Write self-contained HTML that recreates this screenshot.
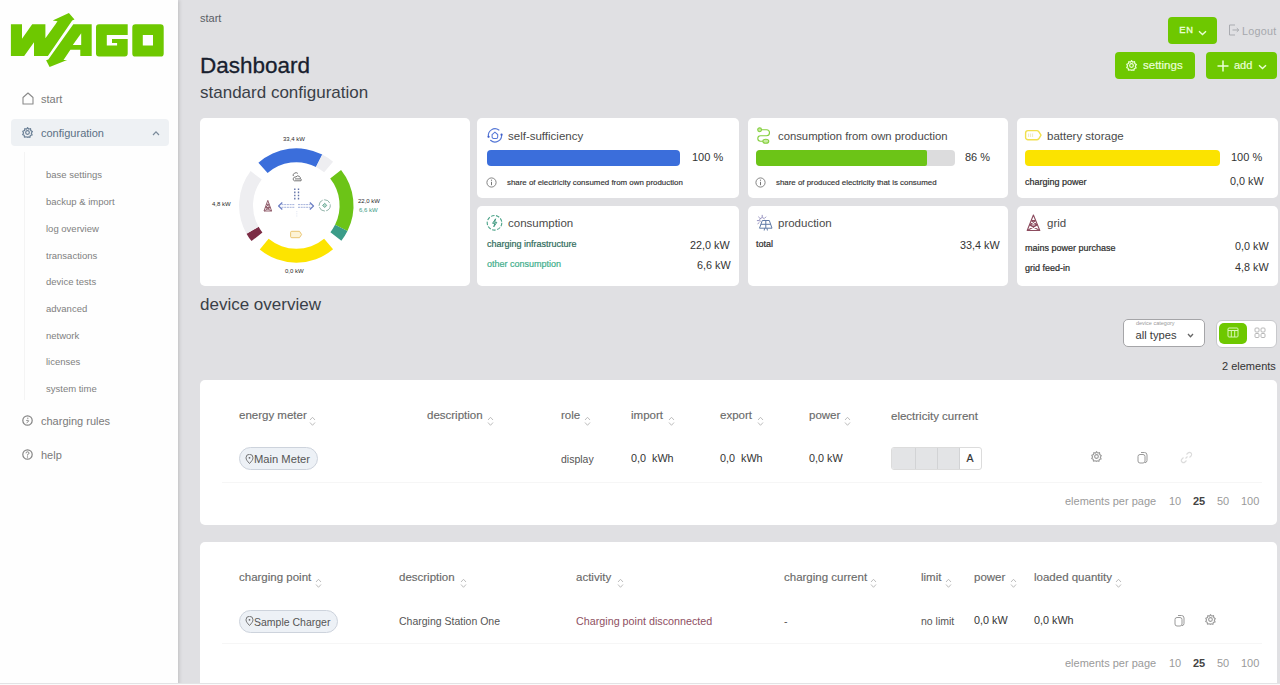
<!DOCTYPE html>
<html><head><meta charset="utf-8">
<style>
*{box-sizing:border-box;margin:0;padding:0}
html,body{width:1280px;height:685px;overflow:hidden}
body{background:#e0e0e3;font-family:"Liberation Sans",sans-serif;position:relative;color:#333}
.a{position:absolute;white-space:nowrap;line-height:1}
#side{position:absolute;left:0;top:0;width:178px;height:685px;background:#fefefe;box-shadow:1px 0 4px rgba(0,0,0,.16)}
.nav{font-size:11px;color:#7a7a7a}
.sub{font-size:9.5px;color:#808080}
.card{position:absolute;background:#fff;border-radius:5px}
.ct{font-size:11.5px;color:#4a4a4a}
.val{font-size:10.8px;color:#333}
.pct{font-size:11px;color:#333}
.small{font-size:7.9px;color:#333;-webkit-text-stroke:0.15px #333}
.lbl{font-size:9px;color:#2b2b2b;-webkit-text-stroke:0.2px currentColor}
.bar{position:absolute;height:16.6px;border-radius:4px;margin-top:0.5px}
.th{font-size:10.5px;color:#555}
.td{font-size:10.5px;color:#444}
.dl{font-size:6px;color:#2a2a2a}
.th{font-size:11.5px;color:#6a6a6a;-webkit-text-stroke:0.15px #6a6a6a}
.td{font-size:10.5px;color:#555}
.td2{font-size:10.8px;color:#333}
.chip{background:#edf1f6;border:1px solid #cdd3dc;border-radius:12px}
.chipt{font-size:10.5px;color:#555}
.epp{font-size:11px;color:#9a9a9a}
.pg{font-size:11px;color:#9a9a9a}
.btn{position:absolute;background:#6ec800;border-radius:4px}
</style></head><body>
<div id="side">
  <svg class="a" style="left:0;top:0" width="178" height="80" viewBox="0 0 178 80">
    <g fill="#6ec800">
      <polygon points="10.9,24.2 22,24.2 22,38.7 32.2,24.2 45.4,24.2 45.4,38.3 55.5,24.2 57.5,21.3 52.7,20.5 68.9,13.1 74.5,19.6 72.2,20.4 47.9,56 34,56 34,42.2 24.2,56 10.9,56"/>
      <polygon fill-rule="evenodd" points="73.3,24.2 91.7,24.2 91.7,56 80.3,56 80.3,49.8 70.4,49.8 63.5,59.9 67.1,59.9 49.6,66.9 46.1,60.3 48.3,59.5 ,73.3,24.2"/>
    </g>
    <polygon fill="#fff" points="81.2,33.2 81.2,45 72.8,45"/>
    <path fill="#6ec800" d="M99,24.2H127.7V35H106.8V45.6H117.1V43H112V38.9H127.7V53.6A3,3 0 0 1 124.7,56.6H99A3,3 0 0 1 96,53.6V27.2A3,3 0 0 1 99,24.2Z"/>
    <path fill="#6ec800" fill-rule="evenodd" d="M135.5,24.2H160.5A3.2,3.2 0 0 1 163.7,27.4V53.4A3.2,3.2 0 0 1 160.5,56.6H135.5A3.2,3.2 0 0 1 132.3,53.4V27.4A3.2,3.2 0 0 1 135.5,24.2ZM142.8,35V45.6H153V35Z"/>
  </svg>
  <!-- start -->
  <svg class="a" style="left:22px;top:92px" width="12" height="13" viewBox="0 0 12 13"><path d="M1,12V5.5L6,1L11,5.5V12Z" fill="none" stroke="#8a8a8a" stroke-width="1.1" stroke-linejoin="round"/></svg>
  <div class="a nav" style="left:41px;top:94px">start</div>
  <div class="a" style="left:11px;top:119px;width:158px;height:27px;background:#eef1f4;border-radius:4px"></div>
  <svg class="a" style="left:22px;top:127px" width="11" height="11" viewBox="0 0 12 12"><g fill="none" stroke="#6a7f95" stroke-width="1.3"><circle cx="6" cy="6" r="2"/><path d="M6,0.8L7.3,2.2L9.3,1.9L9.6,3.9L11.2,5L10.2,6.8L11,8.7L9.1,9.3L8.6,11.2L6.7,10.7L6,11.2L4.5,10.7L2.7,11L2.4,9.1L0.8,8.3L1.7,6.5L0.9,4.6L2.7,3.9L3.1,1.9L5,2.3Z"/></g></svg>
  <div class="a nav" style="left:41px;top:128px;color:#5b7085">configuration</div>
  <svg class="a" style="left:152px;top:130px" width="8" height="6" viewBox="0 0 8 6"><path d="M1,5L4,1.8L7,5" fill="none" stroke="#7a8a9a" stroke-width="1.2"/></svg>
  <div class="a" style="left:24px;top:152px;width:1px;height:248px;background:#f4f4f4"></div>
  <div class="a sub" style="left:46px;top:170px">base settings</div>
  <div class="a sub" style="left:46px;top:197px">backup &amp; import</div>
  <div class="a sub" style="left:46px;top:224px">log overview</div>
  <div class="a sub" style="left:46px;top:251px">transactions</div>
  <div class="a sub" style="left:46px;top:277px">device tests</div>
  <div class="a sub" style="left:46px;top:304px">advanced</div>
  <div class="a sub" style="left:46px;top:331px">network</div>
  <div class="a sub" style="left:46px;top:357px">licenses</div>
  <div class="a sub" style="left:46px;top:384px">system time</div>
  <svg class="a" style="left:22px;top:415px" width="11" height="11" viewBox="0 0 11 11"><circle cx="5.5" cy="5.5" r="4.7" fill="none" stroke="#858585" stroke-width="1.2"/><path d="M5.8,2.6V4.2M4.2,5.4L6.8,5.8L4.6,8.2" fill="none" stroke="#858585" stroke-width="0.9"/></svg>
  <div class="a nav" style="left:41px;top:416px">charging rules</div>
  <svg class="a" style="left:22px;top:449px" width="11" height="11" viewBox="0 0 11 11"><circle cx="5.5" cy="5.5" r="4.7" fill="none" stroke="#858585" stroke-width="1.2"/><path d="M4,4.3Q4,2.8 5.5,2.8Q7,2.8 7,4.2Q7,5.2 5.5,5.6V6.5" fill="none" stroke="#858585" stroke-width="1"/><circle cx="5.5" cy="8" r="0.65" fill="#858585"/></svg>
  <div class="a nav" style="left:41px;top:450px">help</div>
</div>

<!-- MAIN -->
<div class="a" style="left:200px;top:13px;font-size:11px;color:#5a5e66">start</div>
<div class="a" style="left:200px;top:54.9px;font-size:22.5px;color:#18202e;-webkit-text-stroke:0.3px #18202e">Dashboard</div>
<div class="a" style="left:200px;top:84px;font-size:17px;color:#3a3f48">standard configuration</div>

<!-- top buttons -->
<div class="btn" style="left:1168px;top:17px;width:49px;height:27px"></div>
<div class="a" style="left:1179.3px;top:26.2px;font-size:9.3px;letter-spacing:0.7px;color:#eaffd6;-webkit-text-stroke:0.35px #eaffd6">EN</div>
<svg class="a" style="left:1198px;top:30px" width="9" height="6" viewBox="0 0 9 6"><path d="M1,1.2L4.5,4.6L8,1.2" fill="none" stroke="#eaffd6" stroke-width="1.4"/></svg>
<svg class="a" style="left:1228px;top:24px" width="12" height="12" viewBox="0 0 12 12"><path d="M7,1H1.5V11H7M4.5,6H10.5M8.8,4.2L10.8,6L8.8,7.8" fill="none" stroke="#a9abb0" stroke-width="1"/></svg>
<div class="a" style="left:1242px;top:25.5px;font-size:10.8px;letter-spacing:0.25px;color:#a6a8ad">Logout</div>

<div class="btn" style="left:1115px;top:52px;width:80px;height:27px"></div>
<svg class="a" style="left:1126px;top:60px" width="11" height="11" viewBox="0 0 12 12"><g fill="none" stroke="#eaffd6" stroke-width="1.3"><circle cx="6" cy="6" r="2"/><path d="M6,0.8L7.3,2.2L9.3,1.9L9.6,3.9L11.2,5L10.2,6.8L11,8.7L9.1,9.3L8.6,11.2L6.7,10.7L6,11.2L4.5,10.7L2.7,11L2.4,9.1L0.8,8.3L1.7,6.5L0.9,4.6L2.7,3.9L3.1,1.9L5,2.3Z"/></g></svg>
<div class="a" style="left:1143px;top:60px;font-size:11.5px;color:#eaffd6;-webkit-text-stroke:0.2px #eaffd6">settings</div>
<div class="btn" style="left:1206px;top:52px;width:71px;height:27px"></div>
<svg class="a" style="left:1217px;top:60px" width="12" height="12" viewBox="0 0 12 12"><path d="M6,0.5V11.5M0.5,6H11.5" stroke="#eaffd6" stroke-width="1.5"/></svg>
<div class="a" style="left:1234px;top:60px;font-size:11px;color:#eaffd6;-webkit-text-stroke:0.2px #eaffd6">add</div>
<svg class="a" style="left:1258px;top:64px" width="9" height="6" viewBox="0 0 9 6"><path d="M1,1.2L4.5,4.6L8,1.2" fill="none" stroke="#eaffd6" stroke-width="1.4"/></svg>

<!-- CARDS -->
<div class="card" style="left:200px;top:118px;width:270px;height:168px"></div>
<div class="card" style="left:477px;top:118px;width:262px;height:80px"></div>
<div class="card" style="left:748px;top:118px;width:260px;height:80px"></div>
<div class="card" style="left:1017px;top:118px;width:261px;height:80px"></div>
<div class="card" style="left:477px;top:206px;width:262px;height:80px"></div>
<div class="card" style="left:748px;top:206px;width:260px;height:80px"></div>
<div class="card" style="left:1017px;top:206px;width:261px;height:80px"></div>

<!-- donut -->
<svg class="a" style="left:200px;top:118px" width="270" height="167" viewBox="200 118 270 167"><path fill="#3b6edb" d="M258.40,162.66A57.2,57.2 0 0 1 322.27,154.53L315.96,166.92A43.3,43.3 0 0 0 267.61,173.07Z"/><path fill="#eeeef1" d="M322.27,154.53A57.2,57.2 0 0 1 333.07,161.68L324.13,172.33A43.3,43.3 0 0 0 315.96,166.92Z"/><path fill="#6cc417" d="M341.07,169.89A57.2,57.2 0 0 1 347.49,231.02L335.05,224.82A43.3,43.3 0 0 0 330.19,178.55Z"/><path fill="#3b9c88" d="M347.49,231.02A57.2,57.2 0 0 1 341.37,240.72L330.42,232.16A43.3,43.3 0 0 0 335.05,224.82Z"/><path fill="#fde400" d="M333.07,249.32A57.2,57.2 0 0 1 259.76,249.51L268.64,238.82A43.3,43.3 0 0 0 324.13,238.67Z"/><path fill="#7c2c45" d="M251.53,241.11A57.2,57.2 0 0 1 246.52,233.67L258.61,226.82A43.3,43.3 0 0 0 262.41,232.45Z"/><path fill="#eeeef1" d="M246.52,233.67A57.2,57.2 0 0 1 250.62,171.08L261.72,179.44A43.3,43.3 0 0 0 258.61,226.82Z"/>
<g fill="none" stroke="#666" stroke-width="0.9"><path d="M293.2,176A2.8,2.8 0 0 1 297.8,173.4"/><path d="M294.3,180.8Q292.6,180.2 293.4,178.3Q294,176.6 296,176.9Q297.3,175 299.4,176.4Q300.6,177.3 300.3,178.6Q302,179.2 301,180.8Z"/><path d="M295,178.9H300.5"/></g>
<g stroke="#6474a8" stroke-width="1.4" stroke-dasharray="1.6 1.5"><path d="M294.8,188.5V201M298.5,188.5V201"/></g>
<g stroke="#8d9dd2" stroke-width="0.8" stroke-dasharray="2 0.7"><path d="M281.5,204.6H294.5M281.5,207.3H294.5M298,204.6H310.5M298,207.3H310.5"/></g>
<g fill="none" stroke="#6d80c4" stroke-width="1.3" stroke-linejoin="round"><path d="M282.3,202.6L278.6,206L282.3,209.4"/><path d="M309.8,202.6L313.5,206L309.8,209.4"/></g>
<g stroke="#dde2f0" stroke-width="0.8" stroke-dasharray="1.2 1"><path d="M296.8,211V217"/></g>
<g fill="none" stroke="#93606e" stroke-width="1" stroke-linejoin="round"><path d="M267.8,200.4L264,211H271.6Z"/><path d="M266.4,204.3H269.2M265.3,207.5H270.3M266.4,204.3L270.3,207.5L264,211M269.2,204.3L265.3,207.5L271.6,211"/></g>
<circle cx="324.7" cy="205.4" r="5.6" fill="none" stroke="#86ab9f" stroke-width="0.9" stroke-dasharray="7 1.3"/>
<path d="M324.7,203.3L326.8,205.4L324.7,207.5L322.6,205.4Z" fill="#b9d8cc" stroke="#4f9a84" stroke-width="0.8"/>
<path d="M291.8,231.3H299.5L301.6,234.5L299.5,237.7H291.8A1.2,1.2 0 0 1 290.6,236.5V232.5A1.2,1.2 0 0 1 291.8,231.3Z" fill="#fdf3d6" stroke="#e8c066" stroke-width="0.9"/>
</svg>
<div class="a dl" style="left:283px;top:136px">33,4 kW</div>
<div class="a dl" style="left:212px;top:201px">4,8 kW</div>
<div class="a dl" style="left:358px;top:198px">22,0 kW</div>
<div class="a dl" style="left:359px;top:207px;color:#3e9a84">6,6 kW</div>
<div class="a dl" style="left:285px;top:268px">0,0 kW</div>

<!-- card2 self-sufficiency -->
<svg class="a" style="left:485px;top:126px" width="20" height="19" viewBox="485 126 20 19"><g fill="none" stroke="#5577d6" stroke-width="1.15" stroke-linecap="round"><path d="M488.54,136.77A6.6,6.6 0 0 1 498.88,130.06"/><path d="M501.56,134.71A6.6,6.6 0 0 1 490.58,140.30"/><path d="M492.1,134.6L494.9,132.2L497.7,134.6V137A1.4,1.4 0 0 1 496.3,138.4H493.5A1.4,1.4 0 0 1 492.1,137Z" stroke-width="1.05"/></g><circle cx="488.54" cy="136.77" r="1.1" fill="#3d5cc8"/><circle cx="501.56" cy="134.71" r="1.1" fill="#3d5cc8"/></svg>
<div class="a ct" style="left:508px;top:130.8px">self-sufficiency</div>
<div class="bar" style="left:487px;top:149px;width:193px;background:#3b6edb"></div>
<div class="a pct" style="left:692px;top:152px">100 %</div>
<svg class="a" style="left:486px;top:177px" width="11" height="11" viewBox="0 0 11 11"><circle cx="5.5" cy="5.5" r="4.6" fill="none" stroke="#777" stroke-width="0.9"/><path d="M5.5,4.8V8.2" stroke="#777" stroke-width="1"/><circle cx="5.5" cy="3.2" r="0.6" fill="#777"/></svg>
<div class="a small" style="left:507px;top:179px">share of electricity consumed from own production</div>

<!-- card3 consumption from own production -->
<svg class="a" style="left:756px;top:127px" width="17" height="17" viewBox="0 0 17 17"><g fill="none" stroke="#84cf3e" stroke-width="1.1"><circle cx="3.6" cy="2.8" r="1.9" fill="#c8eca0"/><ellipse cx="9.8" cy="14.2" rx="3" ry="2" fill="#c8eca0"/><path d="M5.5,2.8H10.5A3,3 0 0 1 10.5,8.8H4.5A2.7,2.7 0 0 0 4.5,14.2H6.8"/></g></svg>
<div class="a ct" style="left:778px;top:130.8px;font-size:11.3px">consumption from own production</div>
<div class="bar" style="left:756px;top:149px;width:199px;background:#dcdcdd"></div>
<div class="bar" style="left:756px;top:149px;width:171px;background:#6cc417;border-radius:4px 2px 2px 4px"></div>
<div class="a pct" style="left:965px;top:152px">86 %</div>
<svg class="a" style="left:755px;top:177px" width="11" height="11" viewBox="0 0 11 11"><circle cx="5.5" cy="5.5" r="4.6" fill="none" stroke="#777" stroke-width="0.9"/><path d="M5.5,4.8V8.2" stroke="#777" stroke-width="1"/><circle cx="5.5" cy="3.2" r="0.6" fill="#777"/></svg>
<div class="a small" style="left:776px;top:179px">share of produced electricity that is consumed</div>

<!-- card4 battery -->
<svg class="a" style="left:1022px;top:127px" width="22" height="16" viewBox="1022 127 22 16"><path d="M1028,130.6H1036.8Q1038,130.6 1038.8,131.6L1041,135.2L1038.8,138.8Q1038,139.8 1036.8,139.8H1028A2.4,2.4 0 0 1 1025.6,137.4V133A2.4,2.4 0 0 1 1028,130.6Z" fill="none" stroke="#f1e04e" stroke-width="1.4" stroke-linejoin="round"/><path d="M1028.6,133.5V137M1030.6,133.5V137M1032.6,133.5V137" stroke="#e8e4b0" stroke-width="0.8"/></svg>
<div class="a ct" style="left:1047px;top:130.8px">battery storage</div>
<div class="bar" style="left:1025px;top:149px;width:195px;background:#fbe300"></div>
<div class="a pct" style="left:1231px;top:152px">100 %</div>
<div class="a lbl" style="left:1025px;top:178px">charging power</div>
<div class="a val" style="left:1230px;top:176px">0,0 kW</div>

<!-- card5 consumption -->
<svg class="a" style="left:486px;top:214px" width="18" height="18" viewBox="0 0 18 18"><circle cx="8.5" cy="8.8" r="7.3" fill="none" stroke="#4aa287" stroke-width="1.1" stroke-dasharray="3.6 1.5"/><path d="M9.6,4.8L6.6,9.3H8.8L7.8,12.8L10.8,8.3H8.6Z" fill="none" stroke="#3f9a80" stroke-width="1" stroke-linejoin="round"/></svg>
<div class="a ct" style="left:508px;top:217.8px">consumption</div>
<div class="a lbl" style="left:487px;top:240.3px;color:#2e6b5a">charging infrastructure</div>
<div class="a val" style="left:690px;top:240.2px">22,0 kW</div>
<div class="a lbl" style="left:487px;top:260.3px;color:#3fae8c">other consumption</div>
<div class="a val" style="left:697px;top:260.2px">6,6 kW</div>

<!-- card6 production -->
<svg class="a" style="left:754px;top:212px" width="20" height="20" viewBox="754 212 20 20"><g fill="none" stroke="#8a86b8" stroke-width="0.9" stroke-linecap="round"><path d="M762.2,215.3V216.8M757.3,220.6H758.8M758.6,217L759.6,218M765.8,217L764.8,218M757.9,223.6L759,222.8"/><path d="M760,221.5A2.6,2.6 0 0 1 764.3,218.6"/></g><g fill="none" stroke="#5f7aa6" stroke-width="1" stroke-linejoin="round"><path d="M762.3,220.5H769.3L772,228.2H759.5Z"/><path d="M760.8,224.3H770.7M765.8,220.5V228.2"/><path d="M764.6,228.2L764.2,230.5M767,228.2L767.4,230.5"/></g></svg>
<div class="a ct" style="left:778px;top:217.8px">production</div>
<div class="a lbl" style="left:756px;top:240.3px">total</div>
<div class="a val" style="left:960px;top:240.2px">33,4 kW</div>

<!-- card7 grid -->
<svg class="a" style="left:1024px;top:212px" width="20" height="21" viewBox="1024 212 20 21"><g fill="none" stroke="#8c4c5f" stroke-width="1.1" stroke-linejoin="round"><path d="M1033.4,215L1027.2,230.5H1039.8Z"/><path d="M1031.2,220.5H1035.6M1029.6,225H1037.2M1031.2,220.5L1037.2,225L1027.2,230.5M1035.6,220.5L1029.6,225L1039.8,230.5"/></g></svg>
<div class="a ct" style="left:1047px;top:217.8px">grid</div>
<div class="a lbl" style="left:1025px;top:244px">mains power purchase</div>
<div class="a val" style="left:1235px;top:241.2px">0,0 kW</div>
<div class="a lbl" style="left:1025px;top:264px">grid feed-in</div>
<div class="a val" style="left:1235px;top:262.2px">4,8 kW</div>

<div class="a" style="left:200px;top:296px;font-size:17px;color:#3a3f48">device overview</div>

<!-- TABLE CARDS -->
<div class="card" style="left:200px;top:380px;width:1077px;height:145px"></div>
<div class="card" style="left:200px;top:542px;width:1077px;height:160px"></div>

<!-- TABLE 1 -->
<div class="a th" style="left:239px;top:409.5px">energy meter</div><svg class="a" style="left:309px;top:416px" width="7" height="11" viewBox="0 0 7 11"><path d="M1,4L3.5,1.3L6,4M1,6.5L3.5,9.3L6,6.5" fill="none" stroke="#b5b5b5" stroke-width="0.9"/></svg>
<div class="a th" style="left:427px;top:409.5px">description</div><svg class="a" style="left:487px;top:416px" width="7" height="11" viewBox="0 0 7 11"><path d="M1,4L3.5,1.3L6,4M1,6.5L3.5,9.3L6,6.5" fill="none" stroke="#b5b5b5" stroke-width="0.9"/></svg>
<div class="a th" style="left:561px;top:409.5px">role</div><svg class="a" style="left:584px;top:416px" width="7" height="11" viewBox="0 0 7 11"><path d="M1,4L3.5,1.3L6,4M1,6.5L3.5,9.3L6,6.5" fill="none" stroke="#b5b5b5" stroke-width="0.9"/></svg>
<div class="a th" style="left:631px;top:409.5px">import</div><svg class="a" style="left:668px;top:416px" width="7" height="11" viewBox="0 0 7 11"><path d="M1,4L3.5,1.3L6,4M1,6.5L3.5,9.3L6,6.5" fill="none" stroke="#b5b5b5" stroke-width="0.9"/></svg>
<div class="a th" style="left:720px;top:409.5px">export</div><svg class="a" style="left:757px;top:416px" width="7" height="11" viewBox="0 0 7 11"><path d="M1,4L3.5,1.3L6,4M1,6.5L3.5,9.3L6,6.5" fill="none" stroke="#b5b5b5" stroke-width="0.9"/></svg>
<div class="a th" style="left:809px;top:409.5px">power</div><svg class="a" style="left:844px;top:416px" width="7" height="11" viewBox="0 0 7 11"><path d="M1,4L3.5,1.3L6,4M1,6.5L3.5,9.3L6,6.5" fill="none" stroke="#b5b5b5" stroke-width="0.9"/></svg>
<div class="a th" style="left:891px;top:411px">electricity current</div>
<div class="a chip" style="left:239px;top:447px;width:79px;height:23px"></div><svg class="a" style="left:245px;top:454px" width="9" height="10" viewBox="0 0 9 10"><path d="M4.5,9.5C2.5,7.3 1,5.6 1,3.8A3.5,3.5 0 0 1 8,3.8C8,5.6 6.5,7.3 4.5,9.5Z" fill="none" stroke="#666" stroke-width="0.9"/><circle cx="4.5" cy="3.8" r="0.9" fill="#666"/></svg>
<div class="a chipt" style="left:254px;top:453.9px;font-size:11.2px">Main Meter</div>
<div class="a td" style="left:561px;top:453.7px">display</div>
<div class="a td2" style="left:631px;top:452.9px">0,0&nbsp; kWh</div>
<div class="a td2" style="left:720px;top:452.9px">0,0&nbsp; kWh</div>
<div class="a td2" style="left:809px;top:452.9px">0,0 kW</div>
<div class="a" style="left:891px;top:447px;width:91px;height:23px;border:1px solid #dcdcdc;border-radius:3px;background:#fff;overflow:hidden">
 <div class="a" style="left:0;top:0;width:67px;height:21px;background:#e3e4e6"></div>
 <div class="a" style="left:23px;top:0;width:1px;height:21px;background:#d2d3d5"></div>
 <div class="a" style="left:45px;top:0;width:1px;height:21px;background:#d2d3d5"></div>
 <div class="a" style="left:67px;top:0;width:1px;height:21px;background:#d2d3d5"></div>
 <div class="a" style="left:74.6px;top:4.8px;font-size:10.5px;color:#333;-webkit-text-stroke:0.2px #333">A</div>
</div>
<svg class="a" style="left:1091px;top:451px" width="11" height="11" viewBox="0 0 12 12"><g fill="none" stroke="#9a9a9a" stroke-width="1.2"><circle cx="6" cy="6" r="2"/><path d="M6,0.8L7.3,2.2L9.3,1.9L9.6,3.9L11.2,5L10.2,6.8L11,8.7L9.1,9.3L8.6,11.2L6.7,10.7L6,11.2L4.5,10.7L2.7,11L2.4,9.1L0.8,8.3L1.7,6.5L0.9,4.6L2.7,3.9L3.1,1.9L5,2.3Z"/></g></svg><svg class="a" style="left:1137px;top:451px" width="11" height="13" viewBox="0 0 11 13"><g fill="none" stroke="#9a9a9a" stroke-width="1"><path d="M4,1.5H7.5A2.5,2.5 0 0 1 10,4V9.5A2.5,2.5 0 0 1 8,11.8"/><rect x="1" y="3.5" width="7" height="8.5" rx="2"/></g></svg><svg class="a" style="left:1180px;top:451px" width="13" height="13" viewBox="0 0 13 13"><g fill="none" stroke="#dcdcdc" stroke-width="1.1"><path d="M5.5,7.5L7.5,5.5"/><path d="M6.5,3.5L8,2A2.1,2.1 0 0 1 11,5L9.5,6.5"/><path d="M3.5,6.5L2,8A2.1,2.1 0 0 0 5,11L6.5,9.5"/></g></svg>
<div class="a" style="left:222px;top:482px;width:1040px;height:1px;background:#f6f6f6"></div>
<div class="a epp" style="left:1065px;top:495.5px">elements per page</div>
<div class="a pg" style="left:1169px;top:495.5px">10</div>
<div class="a pg" style="left:1193px;top:495.5px;font-weight:bold;color:#444">25</div>
<div class="a pg" style="left:1217px;top:495.5px">50</div>
<div class="a pg" style="left:1241px;top:495.5px">100</div>

<!-- TABLE 2 -->
<div class="a th" style="left:239px;top:571.6px">charging point</div><svg class="a" style="left:315px;top:578px" width="7" height="11" viewBox="0 0 7 11"><path d="M1,4L3.5,1.3L6,4M1,6.5L3.5,9.3L6,6.5" fill="none" stroke="#b5b5b5" stroke-width="0.9"/></svg>
<div class="a th" style="left:399px;top:571.6px">description</div><svg class="a" style="left:460px;top:578px" width="7" height="11" viewBox="0 0 7 11"><path d="M1,4L3.5,1.3L6,4M1,6.5L3.5,9.3L6,6.5" fill="none" stroke="#b5b5b5" stroke-width="0.9"/></svg>
<div class="a th" style="left:576px;top:571.6px">activity</div><svg class="a" style="left:617px;top:578px" width="7" height="11" viewBox="0 0 7 11"><path d="M1,4L3.5,1.3L6,4M1,6.5L3.5,9.3L6,6.5" fill="none" stroke="#b5b5b5" stroke-width="0.9"/></svg>
<div class="a th" style="left:784px;top:571.6px">charging current</div><svg class="a" style="left:870px;top:578px" width="7" height="11" viewBox="0 0 7 11"><path d="M1,4L3.5,1.3L6,4M1,6.5L3.5,9.3L6,6.5" fill="none" stroke="#b5b5b5" stroke-width="0.9"/></svg>
<div class="a th" style="left:921px;top:571.6px">limit</div><svg class="a" style="left:945px;top:578px" width="7" height="11" viewBox="0 0 7 11"><path d="M1,4L3.5,1.3L6,4M1,6.5L3.5,9.3L6,6.5" fill="none" stroke="#b5b5b5" stroke-width="0.9"/></svg>
<div class="a th" style="left:974px;top:571.6px">power</div><svg class="a" style="left:1010px;top:578px" width="7" height="11" viewBox="0 0 7 11"><path d="M1,4L3.5,1.3L6,4M1,6.5L3.5,9.3L6,6.5" fill="none" stroke="#b5b5b5" stroke-width="0.9"/></svg>
<div class="a th" style="left:1034px;top:571.6px">loaded quantity</div><svg class="a" style="left:1115px;top:578px" width="7" height="11" viewBox="0 0 7 11"><path d="M1,4L3.5,1.3L6,4M1,6.5L3.5,9.3L6,6.5" fill="none" stroke="#b5b5b5" stroke-width="0.9"/></svg>
<div class="a chip" style="left:239px;top:610px;width:99px;height:23px"></div><svg class="a" style="left:245px;top:616px" width="9" height="10" viewBox="0 0 9 10"><path d="M4.5,9.5C2.5,7.3 1,5.6 1,3.8A3.5,3.5 0 0 1 8,3.8C8,5.6 6.5,7.3 4.5,9.5Z" fill="none" stroke="#666" stroke-width="0.9"/><circle cx="4.5" cy="3.8" r="0.9" fill="#666"/></svg>
<div class="a chipt" style="left:254px;top:616.5px">Sample Charger</div>
<div class="a td" style="left:399px;top:615.9px">Charging Station One</div>
<div class="a td" style="left:576px;top:615.7px;color:#8e5062;font-size:10.75px">Charging point disconnected</div>
<div class="a td" style="left:784px;top:615.9px">-</div>
<div class="a td" style="left:921px;top:615.9px">no limit</div>
<div class="a td2" style="left:974px;top:615.4px">0,0 kW</div>
<div class="a td2" style="left:1034px;top:615.4px">0,0 kWh</div>
<svg class="a" style="left:1174px;top:614px" width="11" height="13" viewBox="0 0 11 13"><g fill="none" stroke="#9a9a9a" stroke-width="1"><path d="M4,1.5H7.5A2.5,2.5 0 0 1 10,4V9.5A2.5,2.5 0 0 1 8,11.8"/><rect x="1" y="3.5" width="7" height="8.5" rx="2"/></g></svg><svg class="a" style="left:1205px;top:614px" width="11" height="11" viewBox="0 0 12 12"><g fill="none" stroke="#9a9a9a" stroke-width="1.2"><circle cx="6" cy="6" r="2"/><path d="M6,0.8L7.3,2.2L9.3,1.9L9.6,3.9L11.2,5L10.2,6.8L11,8.7L9.1,9.3L8.6,11.2L6.7,10.7L6,11.2L4.5,10.7L2.7,11L2.4,9.1L0.8,8.3L1.7,6.5L0.9,4.6L2.7,3.9L3.1,1.9L5,2.3Z"/></g></svg>
<div class="a" style="left:222px;top:643px;width:1040px;height:1px;background:#f6f6f6"></div>
<div class="a epp" style="left:1065px;top:657.7px">elements per page</div>
<div class="a pg" style="left:1169px;top:657.7px">10</div>
<div class="a pg" style="left:1193px;top:657.7px;font-weight:bold;color:#444">25</div>
<div class="a pg" style="left:1217px;top:657.7px">50</div>
<div class="a pg" style="left:1241px;top:657.7px">100</div>

<!-- filters -->
<div class="a" style="left:1123px;top:319px;width:82px;height:28px;border:1px solid #a5a5a8;border-radius:5px;background:#fff"></div>
<div class="a" style="left:1136px;top:321px;font-size:5.5px;color:#9a9a9a">device category</div>
<div class="a" style="left:1135.5px;top:330px;font-size:11.2px;color:#3a3a3a">all types</div>
<svg class="a" style="left:1187px;top:333px" width="7" height="5" viewBox="0 0 7 5"><path d="M1,1L3.5,3.8L6,1" fill="none" stroke="#666" stroke-width="1.3"/></svg>
<div class="a" style="left:1216px;top:320px;width:61px;height:28px;border:1px solid #c8c9cc;border-radius:6px;background:#fff"></div>
<div class="btn" style="left:1219px;top:323px;width:28px;height:21px;border-radius:5px"></div>
<svg class="a" style="left:1227px;top:327px" width="12" height="11" viewBox="0 0 12 11"><g fill="none" stroke="#d8f7b8" stroke-width="1"><rect x="1" y="1" width="10" height="9" rx="1"/><path d="M1,3.5H11M4.3,3.5V10M7.7,3.5V10"/></g></svg>
<svg class="a" style="left:1254px;top:327px" width="12" height="11" viewBox="0 0 12 11"><g fill="none" stroke="#b0b0b0" stroke-width="0.9"><rect x="1" y="1" width="4" height="4" rx="1"/><rect x="7" y="1" width="4" height="4" rx="1"/><rect x="1" y="6.5" width="4" height="4" rx="1"/><rect x="7" y="6.5" width="4" height="4" rx="1"/></g></svg>
<div class="a" style="left:1222px;top:361px;font-size:11px;color:#333">2 elements</div>

<div class="a" style="left:0;top:683px;width:1280px;height:1px;background:#e3e3e5"></div>
<div class="a" style="left:0;top:684px;width:1280px;height:1px;background:#fbfbfb"></div>
</body></html>
